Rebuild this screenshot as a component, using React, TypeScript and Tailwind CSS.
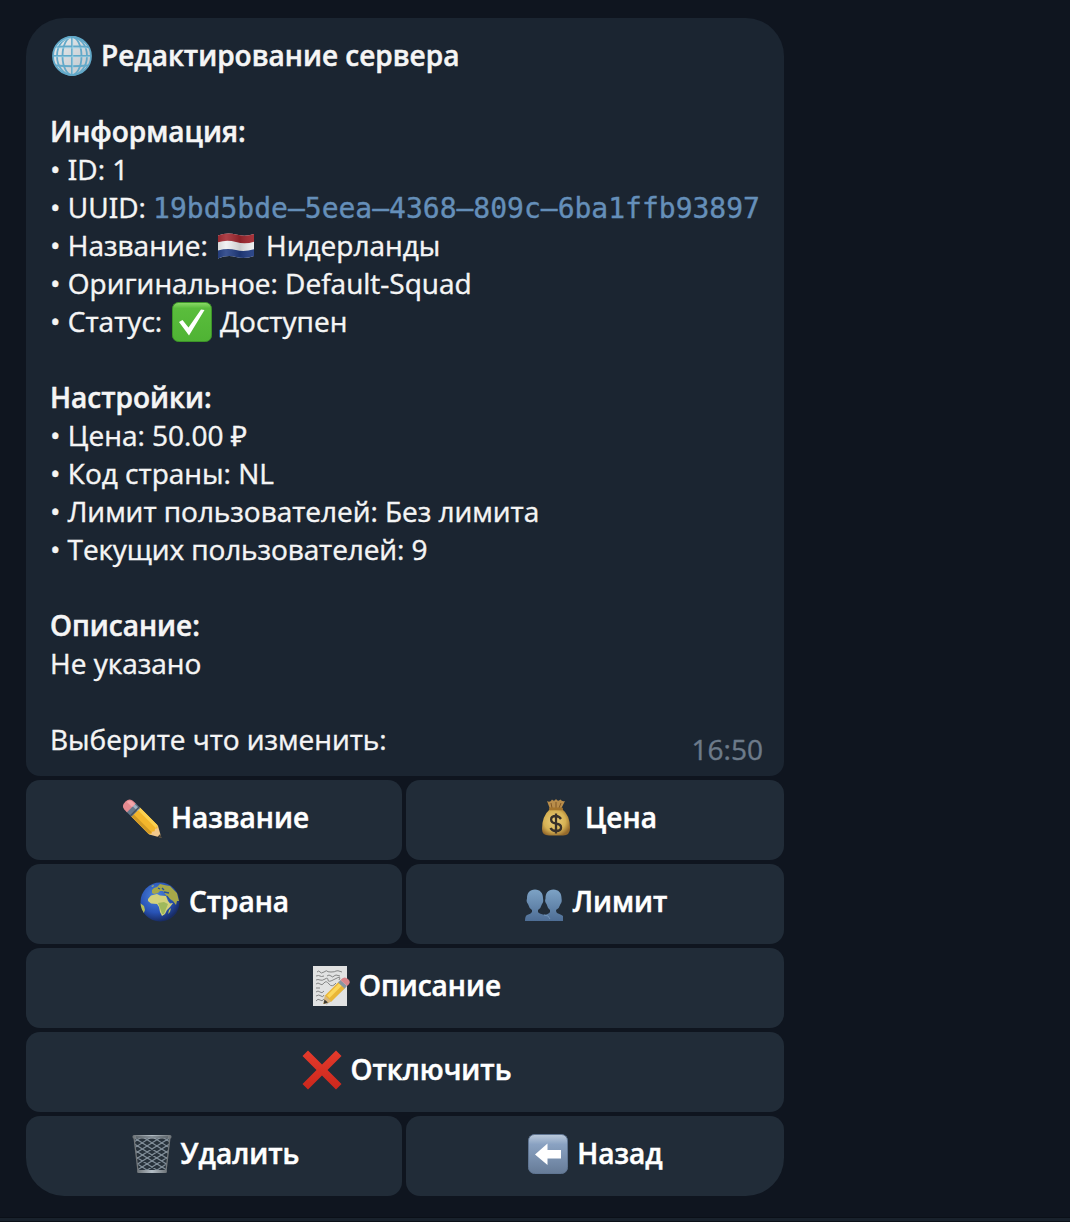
import React from "react";

const svg = "absolute left-0 top-0 h-full w-full overflow-visible";

function Pencil() {
  return (
    <svg className={svg} viewBox="0 0 40 40">
      <g transform="translate(3 4.5) rotate(45)">
        <path d="M13 -6.2H39L50 0 39 6.2H13z" fill="#f2c98c" />
        <path d="M13 -6.2H38L40.500 -4 39 -2 40.500 0 39 2.500 40.500 4.500 38 6.200H13z" fill="#f3b62c" />
        <path d="M13 -6.2H38L39.500 -3H13z" fill="#fbd050" />
        <path d="M13 3H39.500L38 6.200H13z" fill="#d29a24" />
        <path d="M46.500 -2L50.500 0 46.500 2z" fill="#4a4238" />
        <rect x="6" y="-6.200" width="8" height="12.400" fill="#66788b" />
        <path d="M6 -3.500H14" stroke="#9db0c2" strokeWidth="3" />
        <path d="M12.500 -6.200V6.200" stroke="#46525e" strokeWidth="1.500" />
        <path d="M7.500 -6.200H4Q-1 -6 -1 0T4 6.200H7.500z" fill="#e58a90" />
        <path d="M7.500 -5H4Q1 -5 0 -1H7.500z" fill="#f3a6aa" />
      </g>
    </svg>
  );
}

function Globe() {
  return (
    <svg className={svg} viewBox="0 0 40 40">
      <defs>
        <linearGradient id="glb" x1="0" y1="0" x2="1" y2="1"><stop stopColor="#e9ecee" /><stop offset="1" stopColor="#bcc4ca" /></linearGradient>
      </defs>
      <circle cx="20" cy="20" r="19" fill="url(#glb)" />
      <g fill="none" stroke="#62a9c9" strokeWidth="1.800">
        <circle cx="20" cy="20" r="19" />
        <path d="M20 1V39M1 20H39M4 11Q20 9.500 36 11M4 29.500Q20 31 36 29.500" />
        <ellipse cx="20" cy="20" rx="15" ry="19" />
        <ellipse cx="20" cy="20" rx="9.500" ry="19" />
      </g>
      <path d="M3 14Q8 3 19 2M2 20.800H38M5 12H35M20.800 2V38" fill="none" stroke="#a7d8ea" strokeWidth=".7" />
    </svg>
  );
}

function Flag() {
  return (
    <svg className={svg} viewBox="0 0 40 40">
      <defs>
        <clipPath id="flagc"><path d="M2 9.500Q11 6 20 8.500T38 8V30Q29 33.500 20 31T2 32.500z" /></clipPath>
        <linearGradient id="flags"><stop stopColor="#000" stopOpacity=".12" /><stop offset=".25" stopColor="#fff" stopOpacity=".12" /><stop offset=".6" stopColor="#000" stopOpacity=".15" /><stop offset="1" stopColor="#fff" stopOpacity=".05" /></linearGradient>
      </defs>
      <g clipPath="url(#flagc)">
        <rect width="40" height="40" fill="#eff0f1" />
        <path d="M0 0H40V15Q30 19 20 16T0 17z" fill="#a3272f" />
        <path d="M0 25Q11 21.500 20 24T40 22.500V40H0z" fill="#213d83" />
        <rect width="40" height="40" fill="url(#flags)" />
      </g>
    </svg>
  );
}

function Check() {
  return (
    <svg className={svg} viewBox="0 0 40 40">
      <defs><linearGradient id="chk" x2="0" y2="1"><stop stopColor="#8ddc69" /><stop offset=".15" stopColor="#5abd3c" /><stop offset="1" stopColor="#4fb334" /></linearGradient></defs>
      <rect x=".5" y=".5" width="39" height="39" rx="6" fill="url(#chk)" stroke="#3c9428" />
      <path d="M7 20L10.500 18 16.500 25.500 29 7.500 32.500 8 17 33.500z" fill="#fff" />
    </svg>
  );
}

function MoneyBag() {
  return (
    <svg className={svg} viewBox="0 0 40 40">
      <defs>
        <radialGradient id="bag" cx=".45" cy=".45" r=".6"><stop stopColor="#ecd07b" /><stop offset=".65" stopColor="#d6b153" /><stop offset="1" stopColor="#94692b" /></radialGradient>
      </defs>
      <path d="M14 11L11 3Q14 5 16 1.500Q18 4 20 1Q22 4 24.500 1.500Q26 4 29 3L25 11z" fill="#b98d4a" />
      <path d="M16 10L15 5M20 10V4M23 10L25 5" stroke="#805726" strokeWidth="1" />
      <path d="M14 11H26Q34 17 34 30Q34 37.500 27 37.500H13Q6 37.500 6 31Q6 18 14 11z" fill="url(#bag)" />
      <rect x="13" y="9.500" width="14" height="2.800" rx="1.400" fill="#a4742c" />
      <path d="M25 21Q23 18 20 18C13.500 18 13.500 24.500 20 25.500C27 26.500 26.500 33 20 33Q16 33 14.500 30M20 15.500V35.500" fill="none" stroke="#38312a" strokeWidth="2.300" />
    </svg>
  );
}

function Earth() {
  return (
    <svg className={svg} viewBox="0 0 40 40">
      <defs>
        <radialGradient id="ert" cx=".4" cy=".35" r=".65"><stop stopColor="#4d86df" /><stop offset=".65" stopColor="#2852b4" /><stop offset="1" stopColor="#182c66" /></radialGradient>
        <clipPath id="ertc"><circle cx="20" cy="20" r="19.500" /></clipPath>
      </defs>
      <circle cx="20" cy="20" r="19.500" fill="url(#ert)" />
      <g clipPath="url(#ertc)" fill="#b5bd56">
        <path d="M8 17L11 13.500 17 12 20 13.500 26 14 28 19 30 21.500 33 21 30 25 27 28 25 32 22 34 20 30 19 25 17 22 11 21.500 8 19z" fill="#d3d27c" />
        <path d="M18 21L24 20 28 22 26 27 24 32 22 32 20 26z" fill="#9fb95c" />
        <path d="M12 8L14 6 17 5 20 2 24 3 30 4 37 11 39 19 37 19 36 23 33 19 30 17 28 15 25 12 23 9 20 9 18 11 14 12 12 11z" fill="#a6a849" />
        <path d="M0 21L4 24 5 28 3 33-1 25zM29 28L31 26 30 30 28 32zM11 4L14 3 13 5z" />
        <path d="M18 6L20 7M22 6L24 8M24 10L29 11M27 14L31 20" stroke="#24509d" fill="none" strokeWidth="1.300" />
      </g>
    </svg>
  );
}

function People() {
  return (
    <svg className={svg} viewBox="0 0 40 40">
      <defs><linearGradient id="ppl" x1="0" y1="7" x2="0" y2="39" gradientUnits="userSpaceOnUse"><stop stopColor="#7ba0c3" /><stop offset="1" stopColor="#4b6a92" /></linearGradient></defs>
      <g transform="translate(0 2)">
        <g fill="url(#ppl)">
          <path d="M11 5.500C5.500 5.500 3 9 3 14.500C2 17 3 19 4 20Q5 24 8 26V28Q7 30 3 31Q1 32 1 37H22V31Q15 30 14 28V26Q17 24 18 20C20 18 19 15 19 14C19 9 16 5.500 11 5.500z" />
          <path d="M29.500 5.500C24 5.500 21.500 9 21.500 14.500C20.500 17 21.500 19 22.500 20Q23.500 24 26 26V28Q25 30 20 31L22 37H39V32Q38 31 33 29Q32 28 32 26Q35.500 24 36.500 20C38.500 18 37.500 15 37.500 14C37.500 9 34.500 5.500 29.500 5.500z" />
        </g>
        <path d="M20 31Q25 31 26 35" stroke="#7194b9" strokeWidth="1" fill="none" />
      </g>
    </svg>
  );
}

function Memo() {
  return (
    <svg className={svg} viewBox="0 0 40 40">
      <rect x="3" y="0" width="34" height="40" fill="#e1e2e2" />
      <path d="M7 6q2-2 3 0t4 0 3-1 4 1 5-1 6 1M6 10q3-1 4 0t4 0M17 10q2-2 4 0t3 0 6 0M6 14q2-1 4 0t5-1 3 1 7-1 4 1M6 18q2-2 4 0t4-1 5 1 7-1M6 22h4M6 26q2-2 4 0t4-1M6 30q3-2 5 0t3-1M6 35q2-3 4-1t4-1" stroke="#858686" strokeWidth="1" fill="none" />
      <path d="M15 37L34 20" stroke="#b4b4b4" strokeWidth="5" />
      <path d="M13.500 38L15 29.500 29 15.500 35.500 21.500 21.500 35.500z" fill="#e9b637" />
      <path d="M17 29.500L30 16.500 32.500 19 19.500 32z" fill="#fbd75c" />
      <path d="M13.500 38L15 29.500 21.500 35.500z" fill="#d6b680" /><path d="M13.500 38l1-4.500 3.500 3z" fill="#3c3932" />
      <path d="M28 16.500L30.500 14 37 20 34.500 22.500z" fill="#8796a2" />
      <path d="M30.500 14Q34 9.500 38 13T37 20z" fill="#d9858a" />
    </svg>
  );
}

function Cross() {
  return (
    <svg className={svg} viewBox="0 0 40 40">
      <defs><linearGradient id="crs" x2="0" y2="1"><stop stopColor="#e53b2c" /><stop offset="1" stopColor="#cb271c" /></linearGradient></defs>
      <path d="M6 .5L20 14.500 34 .5 39.500 6 25.500 20 39.500 34 34 39.500 20 25.500 6 39.500 .5 34 14.500 20 .5 6z" fill="url(#crs)" />
    </svg>
  );
}

function Bin() {
  return (
    <svg className={svg} viewBox="0 0 40 40">
      <defs>
        <clipPath id="binc"><path d="M2 3H38L34 38H6z" /></clipPath>
        <linearGradient id="binr"><stop stopColor="#6c7276" /><stop offset=".5" stopColor="#b4bec6" /><stop offset="1" stopColor="#6c7276" /></linearGradient>
      </defs>
      <path d="M2 3H38L34 38H6z" fill="#28323b" />
      <path clipPath="url(#binc)" d="M-4 6L44 36M-4 12L38 38M-4 18L28 38M-4 24L18 38M-4 30L9 38M-4 0L44 30M6 0L44 24M16 0L44 18M26 0L44 12M44 6L-4 36M44 12L2 38M44 18L12 38M44 24L22 38M44 30L31 38M44 0L-4 30M34 0L-4 24M24 0L-4 18M14 0L-4 12" stroke="#7f8c97" strokeWidth="1.200" />
      <path d="M2 3L6 37M38 3L34 37" stroke="#72777a" strokeWidth="1.300" />
      <rect x=".5" y="1" width="39" height="3.500" rx="1.500" fill="url(#binr)" />
      <path d="M4 3H36" stroke="#3c464f" strokeWidth=".8" />
      <rect x="5" y="36" width="30" height="3" rx="1.500" fill="url(#binr)" />
    </svg>
  );
}

function Back() {
  return (
    <svg className={svg} viewBox="0 0 40 40">
      <defs><linearGradient id="bck" x2="0" y2="1"><stop stopColor="#bccbdc" /><stop offset=".25" stopColor="#8aa2c2" /><stop offset="1" stopColor="#667b97" /></linearGradient></defs>
      <rect x=".5" y=".5" width="39" height="39" rx="6" fill="url(#bck)" stroke="#5f7592" />
      <path d="M7 20.500L19.500 9.500V16H33V24.500H19.500V31z" fill="#fff" />
    </svg>
  );
}

function Emoji({ children, className = "" }: { children: React.ReactNode; className?: string }) {
  return <span className={"relative inline-block h-10 w-10 shrink-0 " + className}>{children}</span>;
}

function Line({ children, className = "" }: { children?: React.ReactNode; className?: string }) {
  return <div className={"flex h-[38px] items-center whitespace-pre " + className}>{children}</div>;
}

function Heading({ children }: { children: React.ReactNode }) {
  return <b className="font-semibold [-webkit-text-stroke:0.5px]">{children}</b>;
}

/* Capital I with serifs */
function SerifI() {
  return <span className="font-['Noto_Sans']">I</span>;
}

function Button({ icon, label, className = "", gap = "mr-[9px]" }: { icon: React.ReactNode; label: string; className?: string; gap?: string }) {
  return (
    <button className={"flex h-20 items-center justify-center rounded-[14px] bg-[#212c38] pb-1 text-[28px] font-semibold text-white [-webkit-text-stroke:0.5px] " + className}>
      <Emoji className={gap}>{icon}</Emoji>
      <span className="-mt-0.5">{label}</span>
    </button>
  );
}

export default function App() {
  return (
    <div className="flex h-[1222px] w-[1070px] flex-col justify-between overflow-hidden bg-[#0f151f] pt-[18px] font-['Open_Sans','Noto_Sans',sans-serif]">
      <main className="ml-[26px] w-[758px]">
        <section className="relative h-[758px] rounded-t-[38px] rounded-b-[14px] bg-[#1b2531] px-6 pt-[18px] text-[28px] leading-[38px] text-[#f5f5f5] [-webkit-text-stroke:0.4px]">
          <Line><Emoji className="ml-[2px] mr-[9px] mt-0.5"><Globe /></Emoji><Heading>Редактирование сервера</Heading></Line>
          <Line />
          <Line><Heading>Информация:</Heading></Line>
          <Line><span>• <SerifI />D: 1</span></Line>
          <Line><span>• UU<SerifI />D: </span><span className="-mr-2 mt-[3px] font-['DejaVu_Sans_Mono',monospace] text-[28px] text-[#658fb9]">19bd5bde–5eea–4368–809c–6ba1ffb93897</span></Line>
          <Line>• Название: <Emoji className="ml-px mr-[10px] mt-0.5"><Flag /></Emoji>Нидерланды</Line>
          <Line>• Оригинальное: Default-Squad</Line>
          <Line>• Статус: <Emoji className="ml-[3px] mr-[7.5px] mt-0.5"><Check /></Emoji>Доступен</Line>
          <Line />
          <Line><Heading>Настройки:</Heading></Line>
          <Line>• Цена: 50.00 ₽</Line>
          <Line>• Код страны: NL</Line>
          <Line className="tracking-[-0.04px]">• Лимит пользователей: Без лимита</Line>
          <Line className="tracking-[-0.11px]">• Текущих пользователей: 9</Line>
          <Line />
          <Line><Heading>Описание:</Heading></Line>
          <Line>Не указано</Line>
          <Line />
          <Line className="tracking-[-0.04px]">Выберите что изменить:</Line>
          <time className="absolute bottom-2 right-[21px] text-[#6d7b8a]">16:50</time>
        </section>
        <div className="mt-1 grid grid-cols-[376px_378px] gap-1">
          <Button icon={<Pencil />} label="Название" gap="mr-2" className="pl-1" />
          <Button icon={<MoneyBag />} label="Цена" className="pl-[3px]" />
          <Button icon={<Earth />} label="Страна" className="pl-px" />
          <Button icon={<People />} label="Лимит" className="pl-px" />
          <Button icon={<Memo />} label="Описание" className="col-span-2 pl-px" />
          <Button icon={<Cross />} label="Отключить" gap="mr-2" className="col-span-2 pl-1" />
          <Button icon={<Bin />} label="Удалить" className="rounded-bl-[38px] pl-[3px]" />
          <Button icon={<Back />} label="Назад" className="rounded-br-[38px] pl-px" />
        </div>
      </main>
      <footer className="h-[5px] shrink-0 border-y border-[#0b1018] bg-[#19222c]" />
    </div>
  );
}
